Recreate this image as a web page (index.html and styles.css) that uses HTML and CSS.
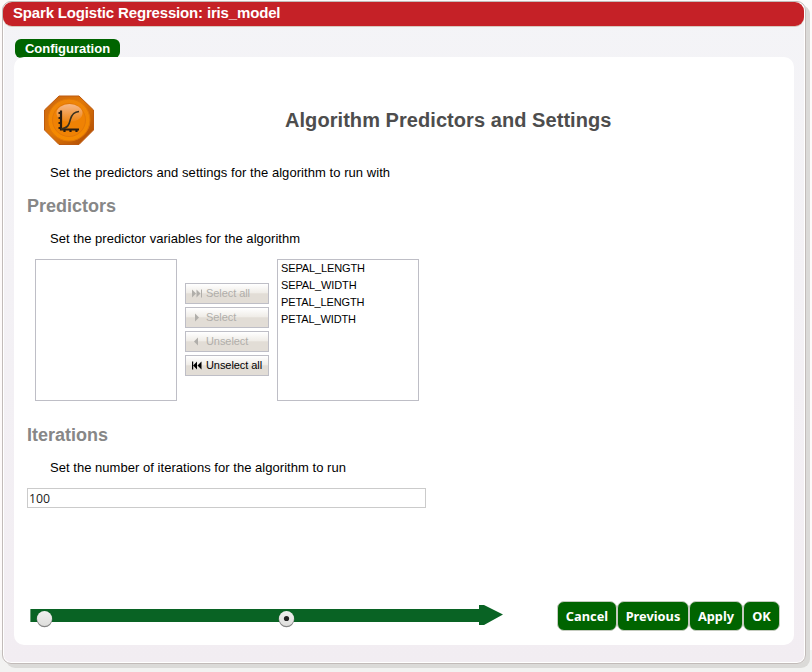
FILE: index.html
```html
<!DOCTYPE html>
<html lang="en">
<head>
<meta charset="utf-8">
<title>Spark Logistic Regression</title>
<link rel="stylesheet" href="styles.css">
</head>
<body>
<div class="dialog">
  <header class="titlebar">Spark Logistic Regression: iris_model</header>
  <main class="body">
    <div class="tab">Configuration</div>
    <section class="panel">
      <div class="heading">
        <svg class="logo" width="50" height="50" viewBox="0 0 50 50">
          <defs>
            <linearGradient id="rim" x1="0" y1="0" x2="1" y2="1"><stop offset="0" stop-color="#c86510"/><stop offset=".45" stop-color="#e07808"/><stop offset="1" stop-color="#a94704"/></linearGradient>
            <linearGradient id="disc" x1="0" y1="0" x2="0" y2="1"><stop offset="0" stop-color="#ee8508"/><stop offset="1" stop-color="#f58a00"/></linearGradient>
            <linearGradient id="gloss" x1="0" y1="0" x2="0" y2="1"><stop offset="0" stop-color="#f6b88a"/><stop offset="1" stop-color="#ee8410"/></linearGradient>
          </defs>
          <path d="M15 1H35L49.500 15V35L35 49.500H15L.5 35V15Z" fill="url(#rim)" stroke="#bd5a10"/>
          <circle cx="25" cy="25" r="21" fill="url(#disc)" stroke="#e07808"/>
          <circle cx="25" cy="25" r="16.500" fill="#ef8204" stroke="#e37808"/>
          <ellipse cx="25.500" cy="18" rx="13" ry="9" fill="url(#gloss)"/>
          <path d="M17 15.500V34.500H35M14.500 18H17M14.500 23H17M14.500 28H17M14.500 33H17M20.500 34V37M26.500 34V37M32.500 34V37" fill="none" stroke="#2b1d10" stroke-width="2.200"/>
          <path d="M17 34C24 33 25 30 26.500 24C28 19 30 17 35 16.500" fill="none" stroke="#38301f" stroke-width="1.600"/>
        </svg>
        <h1>Algorithm Predictors and Settings</h1>
      </div>
      <p>Set the predictors and settings for the algorithm to run with</p>
      <h2>Predictors</h2>
      <p class="hint">Set the predictor variables for the algorithm</p>
      <div class="picker">
        <ul class="list"></ul>
        <div class="moves">
          <button class="move" disabled><svg width="12" height="9" viewBox="0 0 12 9"><path d="M1 .5L5 4.500L1 8.500ZM5.500 .5L9.500 4.500L5.500 8.500ZM10 .5H11V8.500H10Z"/></svg>Select all</button>
          <button class="move" disabled><svg width="12" height="9" viewBox="0 0 12 9"><path d="M4 .5L8 4.500L4 8.500Z"/></svg>Select</button>
          <button class="move" disabled><svg width="12" height="9" viewBox="0 0 12 9"><path d="M7 .5L3 4.500L7 8.500Z"/></svg>Unselect</button>
          <button class="move"><svg width="12" height="9" viewBox="0 0 12 9"><path d="M1 .5H2.200V8.500H1ZM6 .5V8.500L2.200 4.500ZM10.500 .5V8.500L6.500 4.500Z"/></svg>Unselect all</button>
        </div>
        <ul class="list"><li>SEPAL_LENGTH</li><li>SEPAL_WIDTH</li><li>PETAL_LENGTH</li><li>PETAL_WIDTH</li></ul>
      </div>
      <h2 class="iterations">Iterations</h2>
      <p class="hint">Set the number of iterations for the algorithm to run</p>
      <input class="count" type="text" value="100">
      <footer class="footer">
        <svg class="steps" width="473" height="34" viewBox="0 0 473 34">
          <defs><linearGradient id="knob" x1="0" y1="0" x2="0" y2="1"><stop offset="0" stop-color="#f0f0ef"/><stop offset="1" stop-color="#dededc"/></linearGradient></defs>
          <path d="M0 9H449V5H454L473 14.500L454 25H449V22H0Z" fill="#096324"/>
          <path d="M.5 9V22" stroke="#6b9e78"/>
          <circle cx="14.500" cy="19.500" r="7.800" fill="#858585"/>
          <circle cx="14.500" cy="18.500" r="7.500" fill="url(#knob)"/>
          <circle cx="256.500" cy="19.500" r="7.800" fill="#858585"/>
          <circle cx="256.500" cy="18.500" r="7.500" fill="url(#knob)"/>
          <circle cx="256.500" cy="18.500" r="2.600" fill="#222"/>
        </svg>
        <div class="actions">
          <button class="cancel">Cancel</button><button class="previous">Previous</button><button class="apply">Apply</button><button class="ok">OK</button>
        </div>
      </footer>
    </section>
  </main>
</div>
</body>
</html>
```
FILE: styles.css
```css
* { box-sizing: border-box; }
html { background: linear-gradient(#fdfafa 650px, #f2f2f1 650px); height: 672px; }
body { margin: 0; padding: 1px 0 0 2px; height: 672px; overflow: hidden; font: 13px "Liberation Sans", Arial, sans-serif; color: #000; }
h1, h2, p, ul { margin: 0; padding: 0; }

.dialog {
  width: 804px; height: 663px;
  border: 1px solid #c2bbb9; border-radius: 9px;
  background: linear-gradient(#f4f4f7, #f2edf2);
  box-shadow: inset 0 0 0 1px #fff, 4px 4px 0 #dbdad8;
}
.titlebar {
  width: 801px; height: 24px; padding-left: 10px;
  border-radius: 9px; background: #c52127; color: #fff;
  box-shadow: 0 1px 0 #d8c8be;
  font-size: 15px; font-weight: bold; line-height: 22px; letter-spacing: -.165px;
}
.body { padding: 13px 0 0 11px; }
.tab {
  width: 105px; height: 19px; margin: 0 0 -1px 1px;
  border-radius: 6px; background: #006400; color: #fff;
  font-weight: bold; line-height: 20px; text-align: center;
}
.panel {
  width: 780px; height: 588px; padding: 38px 0 0 13px;
  border-radius: 10px; background: #fff;
}
.heading { display: flex; align-items: center; height: 50px; padding-left: 17px; }
.heading h1 { margin-left: 191px; color: #4d4d4d; font-size: 20px; line-height: 24px; letter-spacing: .06px; }
.panel p { padding-left: 23px; line-height: 16px; letter-spacing: .055px; }
.panel .hint { letter-spacing: .035px; }
.heading + p { margin-top: 20px; }
.panel h2 { margin: 15px 0 14px; color: #878787; font-size: 18px; line-height: 21px; }

.picker { display: flex; gap: 8px; margin: 12px 0 0 8px; }
.list { width: 142px; height: 142px; padding: 0 3px; border: 1px solid #bebec6; list-style: none; font-size: 11px; line-height: 17px; letter-spacing: -.12px; }
.moves { display: flex; flex-direction: column; gap: 3px; padding-top: 24px; }
.move {
  display: flex; align-items: center; gap: 3px;
  width: 84px; height: 21px; padding: 0 0 2px 5px;
  border: 1px solid #bebec6; background: linear-gradient(#fff 0, #f0ede8 45%, #e2ddd6 52%, #e2ddd6);
  color: #000; font: 11px "Liberation Sans", Arial, sans-serif; letter-spacing: -.07px; white-space: nowrap;
}
.move svg { fill: currentColor; flex: none; margin-top: 1px; }
.move:disabled { color: #b0aeaa; }
.panel .iterations { margin-top: 24px; }
.count {
  display: block; width: 399px; height: 20px; margin-top: 12px; padding: 0 1px;
  border: 1px solid #cbcbcb; background: #fff; color: #222;
  font: 500 12.300px "Open Sans", sans-serif;
}
.footer { display: flex; justify-content: space-between; width: 753px; margin: 92px 0 0 3px; }
.actions { display: flex; align-items: flex-start; width: 223px; margin-right: 3px; }
.actions button {
  flex: none; height: 30px; margin: 1px 0 0; padding: 0 0 1px;
  border: 1px solid #c5cbbf; border-radius: 7px; background: #006400; color: #fff;
  font: bold 12.800px "Noto Sans", sans-serif;
}
.cancel { width: 60px; }
.previous { width: 72px; }
.apply { width: 54px; }
.ok { width: 37px; }
```
